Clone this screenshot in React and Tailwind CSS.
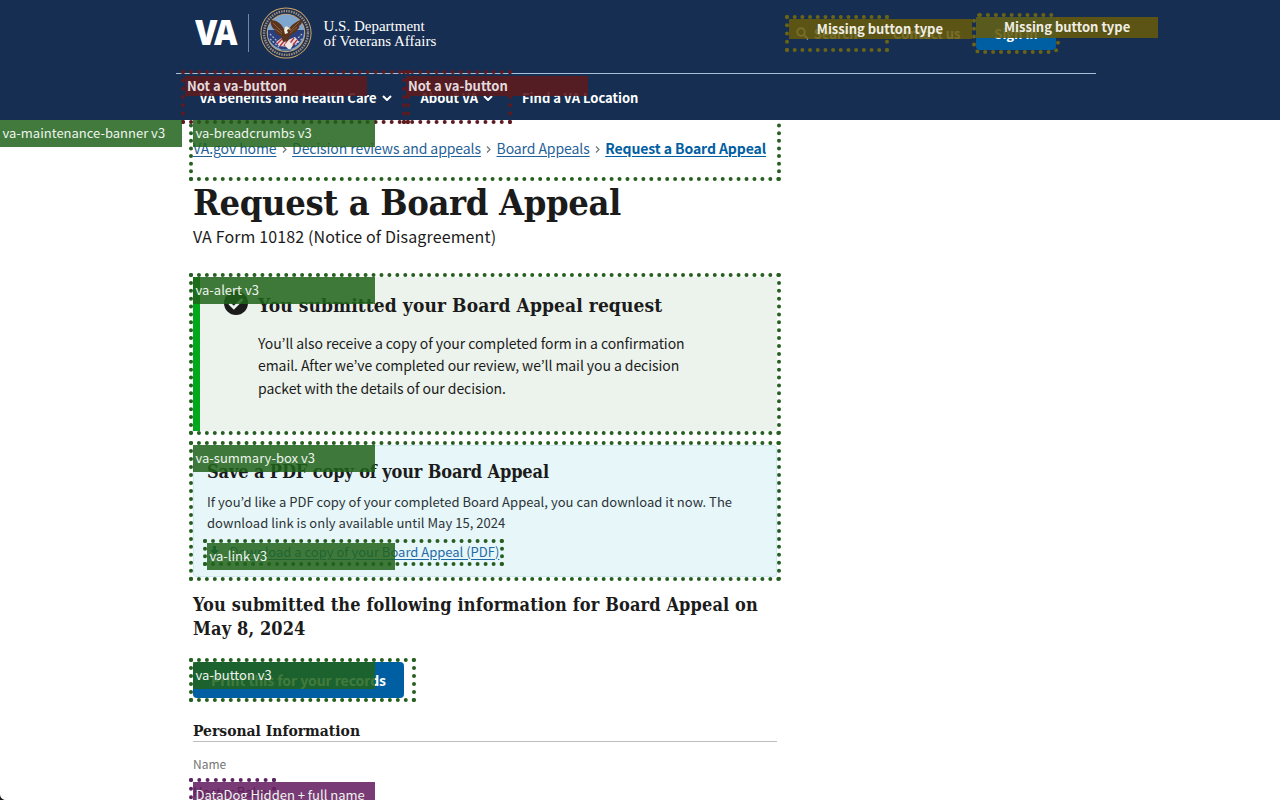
import React from "react";

const SANS = "font-['Noto_Sans_CJK_KR','Open_Sans',sans-serif]";
const SERIF = "font-['DejaVu_Serif_Condensed','DejaVu_Serif',serif] font-bold";
const GREEN_OUTLINE = "relative outline-4 outline-dotted outline-[#265f20]";

function Tag({
  children,
  place = "left-0 top-0",
  width = "w-[182px]",
  color = "bg-[#20631a]/85",
  leading = "leading-[26px]",
}) {
  return (
    <span
      className={`absolute z-10 block h-[27px] whitespace-nowrap pl-[2.5px] text-[13px] text-[#eef4ee] ${place} ${width} ${color} ${leading}`}
    >
      {children}
    </span>
  );
}

function Chevron() {
  return (
    <svg className="ml-[5px] h-[6px] w-[10px]" viewBox="0 0 10 6" fill="none" stroke="#fff" strokeWidth="2">
      <path d="M1 1l4 4 4-4" />
    </svg>
  );
}

function Seal() {
  return (
    <svg className="ml-[11px] h-[52px] w-[52px]" viewBox="0 0 52 52">
      <circle cx="26" cy="26" r="25.6" fill="#c9a56c" />
      <circle cx="26" cy="26" r="24.6" fill="#22304f" />
      <circle cx="26" cy="26" r="21.9" fill="none" stroke="#978f80" strokeWidth="2.4" strokeDasharray="1.5 1" />
      <circle cx="26" cy="26" r="19.3" fill="#c7a067" />
      <circle cx="26" cy="26" r="18.5" fill="#7fa6cf" />
      <path d="M8 23h36a18.500 18.500 0 0 1-36 7z" fill="#2b3f7d" />
      <path d="M10 27l12 12M42 27L30 39M10 32l9 8M42 32l-8 7" stroke="#aab6d2" strokeWidth="1.3" strokeDasharray="2 1.500" />
      <path d="M16 35l7-5 5 3 7-3 4 5-10 5-10-1z" fill="#e9dada" />
      <path d="M17 37l6-6M20 39l6-7M28 39l6-8M32 39l5-6M24 39l3-5" stroke="#b3333d" strokeWidth="1.3" />
      <path d="M11 13c5 0 10 3 13 9l3-2 2 2c3-5 8-8 14-10-1 4-2 6-4 7 1 1 0 3-2 4 0 2-2 3-4 3l-3 3-2 5-5 1-2-6c-4-1-6-3-6-6-3-2-5-6-4-10z" fill="#5a341f" />
      <path d="M13 16l9 9M15 22l7 5M39 15l-9 9M37 20l-7 6" stroke="#8e5e38" strokeWidth="1" />
      <path d="M25 20c2-1 4 0 4 2l-2 1 1 3-3 1-1-4z" fill="#f2eee4" />
      <path d="M29 21l2 1-2 1z" fill="#e4a935" />
      <path d="M25 37l4-3 4 4-3 5-3-2z" fill="#efe9e4" />
      <path d="M19 41c4 2 10 2 14 0l-3 3h-8z" fill="#4f7394" />
    </svg>
  );
}

function NavButton({ label, width, tagWidth }) {
  return (
    <div className={`relative flex h-[46px] items-center pt-[2px] pl-[15px] outline-4 outline-dotted outline-[#5d1a20] ${width}`}>
      <span className="leading-[20px]">{label}</span>
      <Chevron />
      <span className={`absolute left-0 top-[2px] z-10 h-[20px] whitespace-nowrap bg-[#5b1b1e]/90 pl-[2.500px] text-[13px] leading-[20px] text-[#e3dadd] ${tagWidth}`}>
        Not a va-button
      </span>
    </div>
  );
}

function Header() {
  return (
    <header className="relative z-10 h-[120px] bg-[#162e51] text-white">
      <div className="ml-[176px] flex h-[73px] w-[920px] items-start pl-[19px]">
        <div className="flex h-[66px] items-center">
          <span className="mb-[3px] w-[43px] origin-left scale-x-90 font-['Open_Sans',sans-serif] text-[36px] leading-[40px] font-extrabold tracking-[-4px]">
            VA
          </span>
          <span className="ml-[10px] h-[38px] w-px bg-[#7487a5]" />
          <Seal />
          <span className="mt-[2px] ml-[11.5px] font-['Liberation_Serif',serif] text-[15px] leading-[15px]">
            <span className="block">U.S. Department</span>
            <span className="block whitespace-nowrap">of Veterans Affairs</span>
          </span>
        </div>
        <div className="ml-auto mr-[40px] flex items-start text-[13px] font-bold">
          <div className="relative mt-[19px] flex h-[29px] w-[96px] items-center pl-[7px] outline-4 outline-dotted outline-[#6a6416]">
            <svg className="h-[13px] w-[13px]" viewBox="0 0 13 13" fill="none" stroke="#fff" strokeWidth="1.8">
              <circle cx="5" cy="5" r="3.8" />
              <path d="M8 8l4 4" />
            </svg>
            <span className="ml-[5px]">Search</span>
            <span className="absolute left-0 top-0 z-10 h-[20px] w-[183px] whitespace-nowrap bg-[#655a0b]/88 pl-[28px] leading-[20px] text-[#f0eee4]">
              Missing button type
            </span>
          </div>
          <span className="mt-[24px] ml-[8px] leading-[20px]">Contact us</span>
          <div className="relative mt-[17px] ml-[15.500px] flex h-[33px] w-[80px] items-center justify-center rounded-[4px] bg-[#005ea2] outline-4 outline-dotted outline-[#6a6416]">
            <span>Sign in</span>
            <span className="absolute left-0 top-0 z-10 h-[20.5px] w-[182px] whitespace-nowrap bg-[#655a0b]/88 pl-[28px] leading-[20px] text-[#f0eee4]">
              Missing button type
            </span>
          </div>
        </div>
      </div>
      <div className="ml-[176px] h-px w-[920px] bg-[#a9bfd8]" />
      <nav className="ml-[184.5px] flex text-[13px] font-bold">
        <NavButton label="VA Benefits and Health Care" width="w-[221px]" tagWidth="w-[182px]" />
        <NavButton label="About VA" width="w-[102px]" tagWidth="w-[182px]" />
        <span className="ml-[14.5px] pt-px leading-[46px]">Find a VA Location</span>
      </nav>
    </header>
  );
}

function Breadcrumbs() {
  const sep = (
    <svg className="mx-[5.3px] mt-[2px] h-[7px] w-[5px]" viewBox="0 0 5 7" fill="none" stroke="#71767a" strokeWidth="1.2">
      <path d="M1 .5l3 3-3 3" />
    </svg>
  );
  return (
    <nav className={`h-[57px] ${GREEN_OUTLINE}`}>
      <Tag>va-breadcrumbs v3</Tag>
      <div className="flex items-center pt-[18px] text-[14px] leading-[20px] tracking-[-0.09px] whitespace-nowrap text-[#1f6299]">
        <a className="underline underline-offset-2">VA.gov home</a>{sep}
        <a className="underline underline-offset-2">Decision reviews and appeals</a>{sep}
        <a className="underline underline-offset-2">Board Appeals</a>{sep}
        <a className="font-bold text-[#005ea2] underline underline-offset-2">Request a Board Appeal</a>
      </div>
    </nav>
  );
}

export default function App() {
  return (
    <div className={`relative h-[800px] w-[1280px] overflow-hidden bg-white text-[#1b1b1b] ${SANS}`}>
      <Header />
      <div className="flex items-start">
        <div className="relative h-[27px] w-[193px] shrink-0">
          <Tag>va-maintenance-banner v3</Tag>
        </div>
        <main className="w-[584px]">
          <Breadcrumbs />
          <h1 className={`mt-[3px] text-[36px] leading-[44px] tracking-[-0.38px] whitespace-nowrap ${SERIF}`}>Request a Board Appeal</h1>
          <p className="text-[16px] leading-[24px] tracking-[0.13px]">VA Form 10182 (Notice of Disagreement)</p>

          <section className={`mt-[29px] flex h-[153.5px] border-l-[7px] border-[#00a91c] bg-[#ecf3ec] ${GREEN_OUTLINE}`}>
            <Tag place="-left-[7px] top-0">va-alert v3</Tag>
            <svg className="mt-[14px] ml-[24px] h-[24px] w-[24px] shrink-0" viewBox="0 0 24 24">
              <circle cx="12" cy="12" r="12" fill="#1b1b1b" />
              <path d="M5.5 12.5l4.3 4.2L18.5 8" fill="none" stroke="#ecf3ec" strokeWidth="2.8" />
            </svg>
            <div className="ml-[10px] pt-[16px]">
              <h2 className={`text-[19px] leading-[24px] tracking-[0.1px] whitespace-nowrap ${SERIF}`}>You submitted your Board Appeal request</h2>
              <p className="mt-[14.5px] text-[14px] leading-[22.9px] tracking-[-0.07px] whitespace-nowrap">
                You’ll also receive a copy of your completed form in a confirmation<br />
                email. After we’ve completed our review, we’ll mail you a decision<br />
                packet with the details of our decision.
              </p>
            </div>
          </section>

          <section className={`mt-[14.5px] h-[132px] ${GREEN_OUTLINE}`}>
            <Tag>va-summary-box v3</Tag>
            <div className="h-full rounded-[3px] border border-[#cdebf1] bg-[#e7f6f8] px-[13px] pt-[14px]">
              <h2 className={`text-[18px] leading-[24px] tracking-[-0.12px] whitespace-nowrap ${SERIF}`}>Save a PDF copy of your Board Appeal</h2>
              <p className="mt-[6.5px] text-[13px] leading-[21.7px] tracking-[0.03px] whitespace-nowrap text-[#2b3337]">
                If you’d like a PDF copy of your completed Board Appeal, you can download it now. The<br />
                download link is only available until May 15, 2024
              </p>
              <div className={`mt-[9.1px] flex h-[18.7px] w-[293px] items-center ${GREEN_OUTLINE}`}>
                <svg className="ml-[2px] h-[12px] w-[11px] shrink-0" viewBox="0 0 11 12" fill="#005ea2">
                  <path d="M4 0h3v4h3L5.500 9 1 4h3zM0 10.500h11V12H0z" />
                </svg>
                <a className="ml-[9.500px] text-[13px] leading-[18.7px] whitespace-nowrap text-[#1f6ba8] underline underline-offset-2">
                  Download a copy of your Board Appeal (PDF)
                </a>
                <Tag width="w-[188px]">va-link v3</Tag>
              </div>
            </div>
          </section>

          <h2 className={`mt-[16px] text-[18px] leading-[24px] tracking-[0.13px] whitespace-nowrap ${SERIF}`}>
            You submitted the following information for Board Appeal on<br />May 8, 2024
          </h2>

          <div className={`mt-[21px] h-[36px] w-[219px] ${GREEN_OUTLINE}`}>
            <button type="button" className="block h-[36px] w-[211px] rounded-[4px] bg-[#005ea2] text-[14px] leading-[35px] font-bold tracking-[-0.06px] text-white">
              Print this for your records
            </button>
            <Tag>va-button v3</Tag>
          </div>

          <h3 className={`mt-[22px] border-b border-[#bcbec0] text-[15.500px] leading-[21px] ${SERIF}`}>Personal Information</h3>
          <p className="mt-[13px] text-[12px] leading-[18px] text-[#757575]">Name</p>
          <div className="relative mt-[9px] h-[22px] w-[79px] text-[13px] leading-[20px] whitespace-nowrap outline-4 outline-dotted outline-[#5c2460]">
            Hector Baker
            <Tag color="bg-[#672062]/88">DataDog Hidden + full name</Tag>
          </div>
        </main>
      </div>
      <svg className="absolute bottom-0 left-0 h-[6px] w-[6px]" viewBox="0 0 6 6">
        <path d="M0 0c0 3.500 2.500 6 6 6H0z" fill="#1b1b1b" />
      </svg>
    </div>
  );
}
